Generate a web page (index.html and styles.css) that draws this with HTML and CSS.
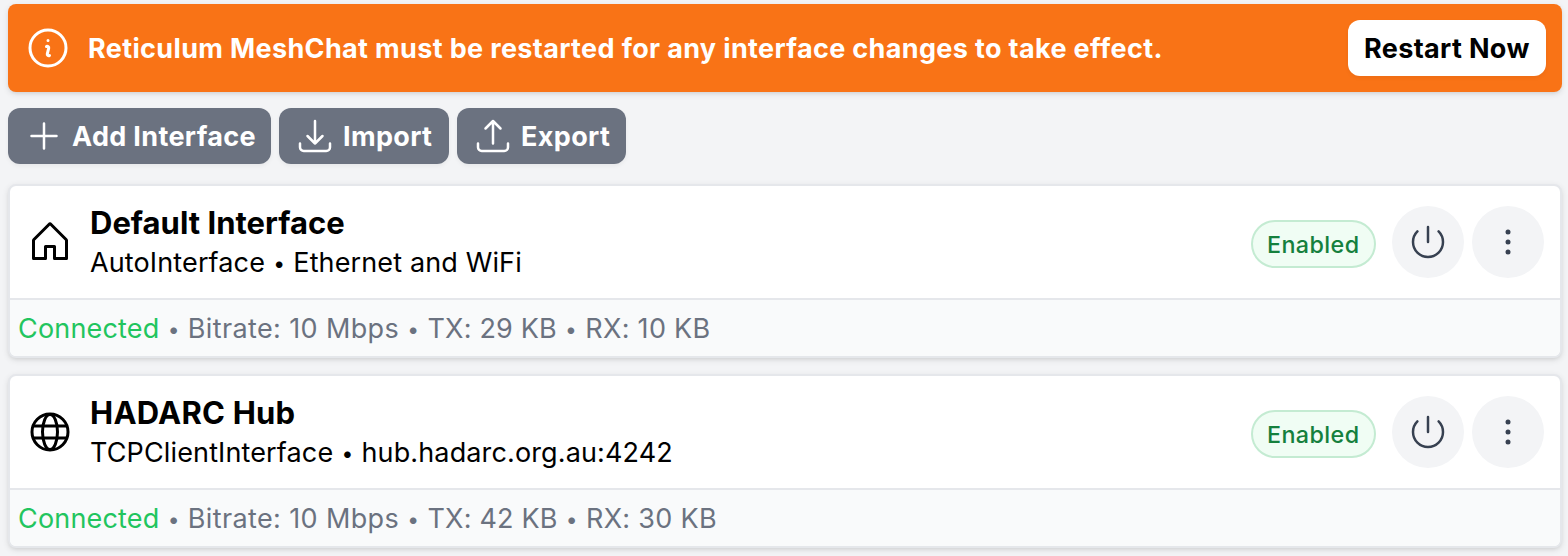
FILE: index.html
```html
<!DOCTYPE html>
<html lang="en">
<head>
<meta charset="utf-8">
<title>Interfaces</title>
<link rel="stylesheet" href="styles.css">
</head>
<body>
<main class="page">
  <section class="banner">
    <svg class="icon-lg line" viewBox="0 0 24 24"><path d="M11.25 11.25l.041-.02a.75.75 0 011.063.852l-.708 2.836a.75.75 0 001.063.853l.041-.021M21 12a9 9 0 11-18 0 9 9 0 0118 0zm-9-3.75h.008v.008H12V8.25z"/></svg>
    <p class="banner-text">Reticulum MeshChat must be restarted for any interface changes to take effect.</p>
    <button class="btn btn-light">Restart Now</button>
  </section>

  <div class="toolbar">
    <button class="btn btn-add"><svg class="icon line" viewBox="0 0 24 24"><path d="M12 4.5v15m7.5-7.5h-15"/></svg><span>Add Interface</span></button>
    <button class="btn btn-import"><svg class="icon line" viewBox="0 0 24 24"><path d="M3 16.5v2.25A2.25 2.25 0 005.25 21h13.5A2.25 2.25 0 0021 18.75V16.5M16.5 12L12 16.5m0 0L7.5 12m4.5 4.5V3"/></svg><span>Import</span></button>
    <button class="btn btn-export"><svg class="icon line" viewBox="0 0 24 24"><path d="M3 16.5v2.25A2.25 2.25 0 005.25 21h13.5A2.25 2.25 0 0021 18.75V16.5m-13.5-9L12 3m0 0l4.5 4.5M12 3v13.5"/></svg><span>Export</span></button>
  </div>

  <article class="card">
    <div class="card-head">
      <svg class="icon-lg" viewBox="0 0 256 256" fill="currentColor"><path d="M219.31,108.68l-80-80a16,16,0,0,0-22.62,0l-80,80A15.87,15.87,0,0,0,32,120v96a8,8,0,0,0,8,8h64a8,8,0,0,0,8-8V160h32v56a8,8,0,0,0,8,8h64a8,8,0,0,0,8-8V120A15.87,15.87,0,0,0,219.31,108.68ZM208,208H160V152a8,8,0,0,0-8-8H104a8,8,0,0,0-8,8v56H48V120l80-80,80,80Z"/></svg>
      <div class="info">
        <h2 class="title">Default Interface</h2>
        <p class="sub">AutoInterface <span class="dot">•</span> Ethernet and WiFi</p>
      </div>
      <span class="badge">Enabled</span>
      <div class="actions">
        <button class="round"><svg class="icon line" viewBox="0 0 24 24"><path d="M5.636 5.636a9 9 0 1012.728 0M12 3v9"/></svg></button>
        <button class="round"><svg class="icon" viewBox="0 0 24 24" fill="currentColor"><circle cx="12" cy="6" r="1.5"/><circle cx="12" cy="12" r="1.5"/><circle cx="12" cy="18" r="1.5"/></svg></button>
      </div>
    </div>
    <div class="card-foot"><span class="ok">Connected</span> <span class="dot">•</span> <span class="rate">Bitrate: 10 Mbps</span> <span class="dot">•</span> TX: 29 KB <span class="dot">•</span> <span class="rx">RX: 10 KB</span></div>
  </article>

  <article class="card">
    <div class="card-head">
      <svg class="icon-lg" viewBox="0 0 256 256" fill="none" stroke="currentColor" stroke-width="16"><circle cx="128" cy="128" r="96"/><ellipse cx="128" cy="128" rx="40" ry="93"/><path d="M37.5 96h181M37.5 160h181"/></svg>
      <div class="info">
        <h2 class="title title-caps">HADARC Hub</h2>
        <p class="sub">TCPClientInterface <span class="dot">•</span> hub.hadarc.org.au:4242</p>
      </div>
      <span class="badge">Enabled</span>
      <div class="actions">
        <button class="round"><svg class="icon line" viewBox="0 0 24 24"><path d="M5.636 5.636a9 9 0 1012.728 0M12 3v9"/></svg></button>
        <button class="round"><svg class="icon" viewBox="0 0 24 24" fill="currentColor"><circle cx="12" cy="6" r="1.5"/><circle cx="12" cy="12" r="1.5"/><circle cx="12" cy="18" r="1.5"/></svg></button>
      </div>
    </div>
    <div class="card-foot"><span class="ok">Connected</span> <span class="dot">•</span> <span class="rate">Bitrate: 10 Mbps</span> <span class="dot">•</span> TX: 42 KB <span class="dot">•</span> <span class="rx">RX: 30 KB</span></div>
  </article>
</main>
</body>
</html>
```
FILE: styles.css
```css
* { box-sizing: border-box; margin: 0; padding: 0; }
body {
  background: #f3f4f6;
  font-family: Inter, "Liberation Sans", sans-serif;
  font-size: 27px;
  line-height: 40px;
  color: #000;
  overflow: hidden;
}
.page { padding: 4px 6px 8px 8px; white-space: nowrap; }
button { font: inherit; border: 0; color: inherit; }
svg { display: block; flex: none; }
.icon { width: 40px; height: 40px; }
.icon-lg { width: 48px; height: 48px; }
.line { fill: none; stroke: currentColor; stroke-width: 1.5; stroke-linecap: round; stroke-linejoin: round; }

.banner {
  display: flex;
  align-items: center;
  height: 88px;
  padding: 0 16px;
  border-radius: 8px;
  background: #f97316;
  color: #fff;
  box-shadow: 0 2px 6px rgba(0, 0, 0, .1), 0 2px 4px -2px rgba(0, 0, 0, .1);
}
.banner-text { margin-left: 16px; padding-top: 2px; font-weight: 650; letter-spacing: .35px; flex: 1; }
.btn {
  display: flex;
  align-items: center;
  gap: 8px;
  height: 56px;
  padding: 0 16px;
  border-radius: 12px;
  background: #6b7280;
  color: #fff;
  font-weight: 650;
  letter-spacing: .35px;
  box-shadow: 0 2px 4px rgba(0, 0, 0, .05);
}
.btn span { padding-top: 2px; }
.btn-light { width: 198px; padding-top: 2px; background: #fff; color: #000; }
.btn-add { width: 263px; }
.btn-import { width: 170px; }
.btn-export { width: 169px; }
.toolbar { display: flex; gap: 8px; margin: 16px 0 20px; }

.card {
  height: 174px;
  margin-bottom: 16px;
  border: 2px solid #e5e7eb;
  border-radius: 8px;
  background: #fff;
  overflow: hidden;
  box-shadow: 0 2px 6px rgba(0, 0, 0, .1), 0 2px 4px -2px rgba(0, 0, 0, .1);
}
.card-head { display: flex; align-items: center; height: 112px; padding: 0 16px; }
.info { margin-left: 16px; padding-top: 2px; flex: 1; }
.title { font-size: 31px; font-weight: 650; line-height: 40px; }
.title-caps { letter-spacing: .22px; }
.sub { line-height: 40px; letter-spacing: .13px; }
.dot {
  display: inline-block;
  width: 12.8px;
  font-size: 21px;
  line-height: 20px;
  text-align: center;
  vertical-align: 1px;
}
.badge {
  display: flex;
  align-items: center;
  width: 125px;
  height: 48px;
  margin: 4px 16px 0 0;
  padding: 2px 16px 0;
  border-radius: 24px;
  background: #f0fdf4;
  box-shadow: inset 0 0 0 2px rgba(22, 163, 74, .2);
  color: #15803d;
  font-size: 23.3px;
  font-weight: 550;
  letter-spacing: .4px;
}
.actions { display: flex; gap: 8px; }
.round {
  display: flex;
  align-items: center;
  justify-content: center;
  width: 72px;
  height: 72px;
  border-radius: 50%;
  background: #f3f4f6;
  color: #374151;
}
.card-foot {
  height: 58px;
  padding: 9px 8px 7px;
  border-top: 2px solid #e5e7eb;
  background: #f9fafb;
  color: #6b7280;
  letter-spacing: .18px;
}
.ok { color: #22c55e; }
.rate { letter-spacing: .37px; }
.rx { letter-spacing: .3px; }
```
